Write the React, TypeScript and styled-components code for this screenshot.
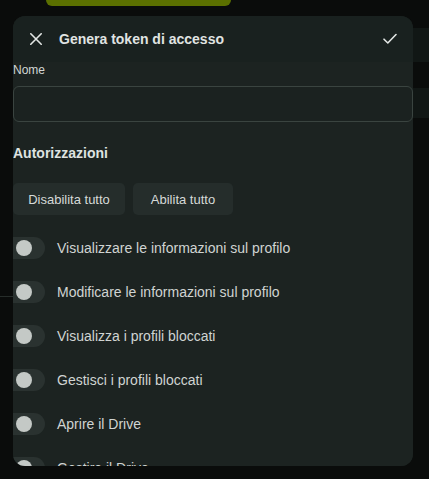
import React from "react";
import styled, { createGlobalStyle } from "styled-components";

const Global = createGlobalStyle`
  html, body { margin: 0; padding: 0; background: #0a0c0b; }
  body { font-family: "Liberation Sans", Arial, sans-serif; }
  * { box-sizing: border-box; }
`;

const Page = styled.div`
  position: relative;
  width: 429px;
  height: 479px;
  overflow: hidden;
  background: #0a0c0b;
`;

const Underlay = styled.div`
  display: flex;
  flex-direction: column;
`;

const GreenButton = styled.div`
  margin-left: 46px;
  width: 185px;
  height: 6px;
  background: #5b7000;
  border-radius: 0 0 6px 6px;
`;

const UnderBar = styled.div<{ $top: number; $h: number }>`
  margin-top: ${(p) => p.$top}px;
  margin-left: 24px;
  height: ${(p) => p.$h}px;
  background: #111715;
  display: flex;
  align-items: center;
  padding-left: 41px;
`;

const GhostTitle = styled.span`
  font-size: 12.5px;
  color: #76817d;
  padding-top: 6px;
`;

const Divider = styled.div`
  margin-top: 178px;
  width: 40px;
  height: 1px;
  background: #262d2a;
`;

const Dialog = styled.div`
  position: absolute;
  left: 13px;
  top: 16px;
  width: 400px;
  height: 450px;
  border-radius: 12px;
  overflow: hidden;
  display: flex;
  flex-direction: column;
  background: #1b2220;
`;

const Header = styled.div`
  position: absolute;
  inset: 0 0 auto 0;
  height: 46px;
  display: flex;
  align-items: center;
  padding: 0 16px 0 17px;
  background: rgba(25, 33, 31, 0.88);
`;

const IconBtn = styled.span<{ $w?: number }>`
  display: flex;
  width: ${(p) => p.$w ?? 12}px;
  height: 12px;
  color: #e2e6e4;
`;

const Title = styled.h1`
  margin: 0 0 0 17px;
  flex: 1;
  font-size: 14px;
  font-weight: 700;
  color: #e0e4e2;
`;

const Body = styled.div`
  margin-top: 46px;
  flex: 1;
  overflow: hidden;
  display: flex;
  flex-direction: column;
  background: #1c2321;
`;

const Label = styled.label`
  font-size: 12px;
  line-height: 16px;
  color: #d2d6d4;
`;

const Input = styled.div`
  margin-top: 8px;
  height: 36px;
  border: 1px solid #3a4440;
  border-radius: 6px;
  background: #1b2220;
  flex-shrink: 0;
`;

const Heading = styled.h2`
  margin: 21px 0 0;
  font-size: 14px;
  line-height: 20px;
  font-weight: 700;
  color: #dfe3e1;
`;

const Buttons = styled.div`
  margin-top: 20px;
  display: flex;
  gap: 8px;
  flex-shrink: 0;
`;

const Btn = styled.button<{ $w: number }>`
  width: ${(p) => p.$w}px;
  height: 32px;
  border: none;
  border-radius: 5px;
  background: #252d2b;
  color: #d6dad8;
  font-family: "Liberation Sans", Arial, sans-serif;
  font-size: 13px;
  padding: 0;
`;

const List = styled.div`
  margin-top: 11px;
  display: flex;
  flex-direction: column;
`;

const Row = styled.div`
  height: 44px;
  flex-shrink: 0;
  display: flex;
  align-items: center;
  gap: 12px;
`;

const Track = styled.span`
  width: 32px;
  height: 22px;
  border-radius: 0 11px 11px 0;
  background: #2a3230;
  flex-shrink: 0;
  display: flex;
  align-items: center;
  padding-left: 3px;
`;

const Knob = styled.span`
  width: 16px;
  height: 16px;
  border-radius: 50%;
  background: #c4c9c6;
`;

const RowText = styled.span`
  font-size: 14px;
  color: #d0d4d2;
`;

const perms = [
  "Visualizzare le informazioni sul profilo",
  "Modificare le informazioni sul profilo",
  "Visualizza i profili bloccati",
  "Gestisci i profili bloccati",
  "Aprire il Drive",
  "Gestire il Drive",
];

export default function App() {
  return (
    <Page>
      <Global />
      <Underlay>
        <GreenButton />
        <UnderBar $top={22} $h={34}>
          <GhostTitle>Gestisci token di accesso</GhostTitle>
        </UnderBar>
        <UnderBar $top={26} $h={30} />
        <Divider />
      </Underlay>
      <Dialog>
        <Body>
          <Label>Nome</Label>
          <Input />
          <Heading>Autorizzazioni</Heading>
          <Buttons>
            <Btn $w={112}>Disabilita tutto</Btn>
            <Btn $w={100}>Abilita tutto</Btn>
          </Buttons>
          <List>
            {perms.map((p) => (
              <Row key={p}>
                <Track>
                  <Knob />
                </Track>
                <RowText>{p}</RowText>
              </Row>
            ))}
          </List>
        </Body>
        <Header>
          <IconBtn>
            <svg width="12" height="12" viewBox="0 0 12 12" fill="none" stroke="currentColor" strokeWidth="1.6" strokeLinecap="round">
              <path d="M0.8 0.8 L11.2 11.2 M11.2 0.8 L0.8 11.2" />
            </svg>
          </IconBtn>
          <Title>Genera token di accesso</Title>
          <IconBtn $w={14}>
            <svg width="14" height="12" viewBox="0 0 14 12" fill="none" stroke="currentColor" strokeWidth="1.6" strokeLinecap="round" strokeLinejoin="round">
              <path d="M1 6.2 L4.8 10 L13 1.5" />
            </svg>
          </IconBtn>
        </Header>
      </Dialog>
    </Page>
  );
}
